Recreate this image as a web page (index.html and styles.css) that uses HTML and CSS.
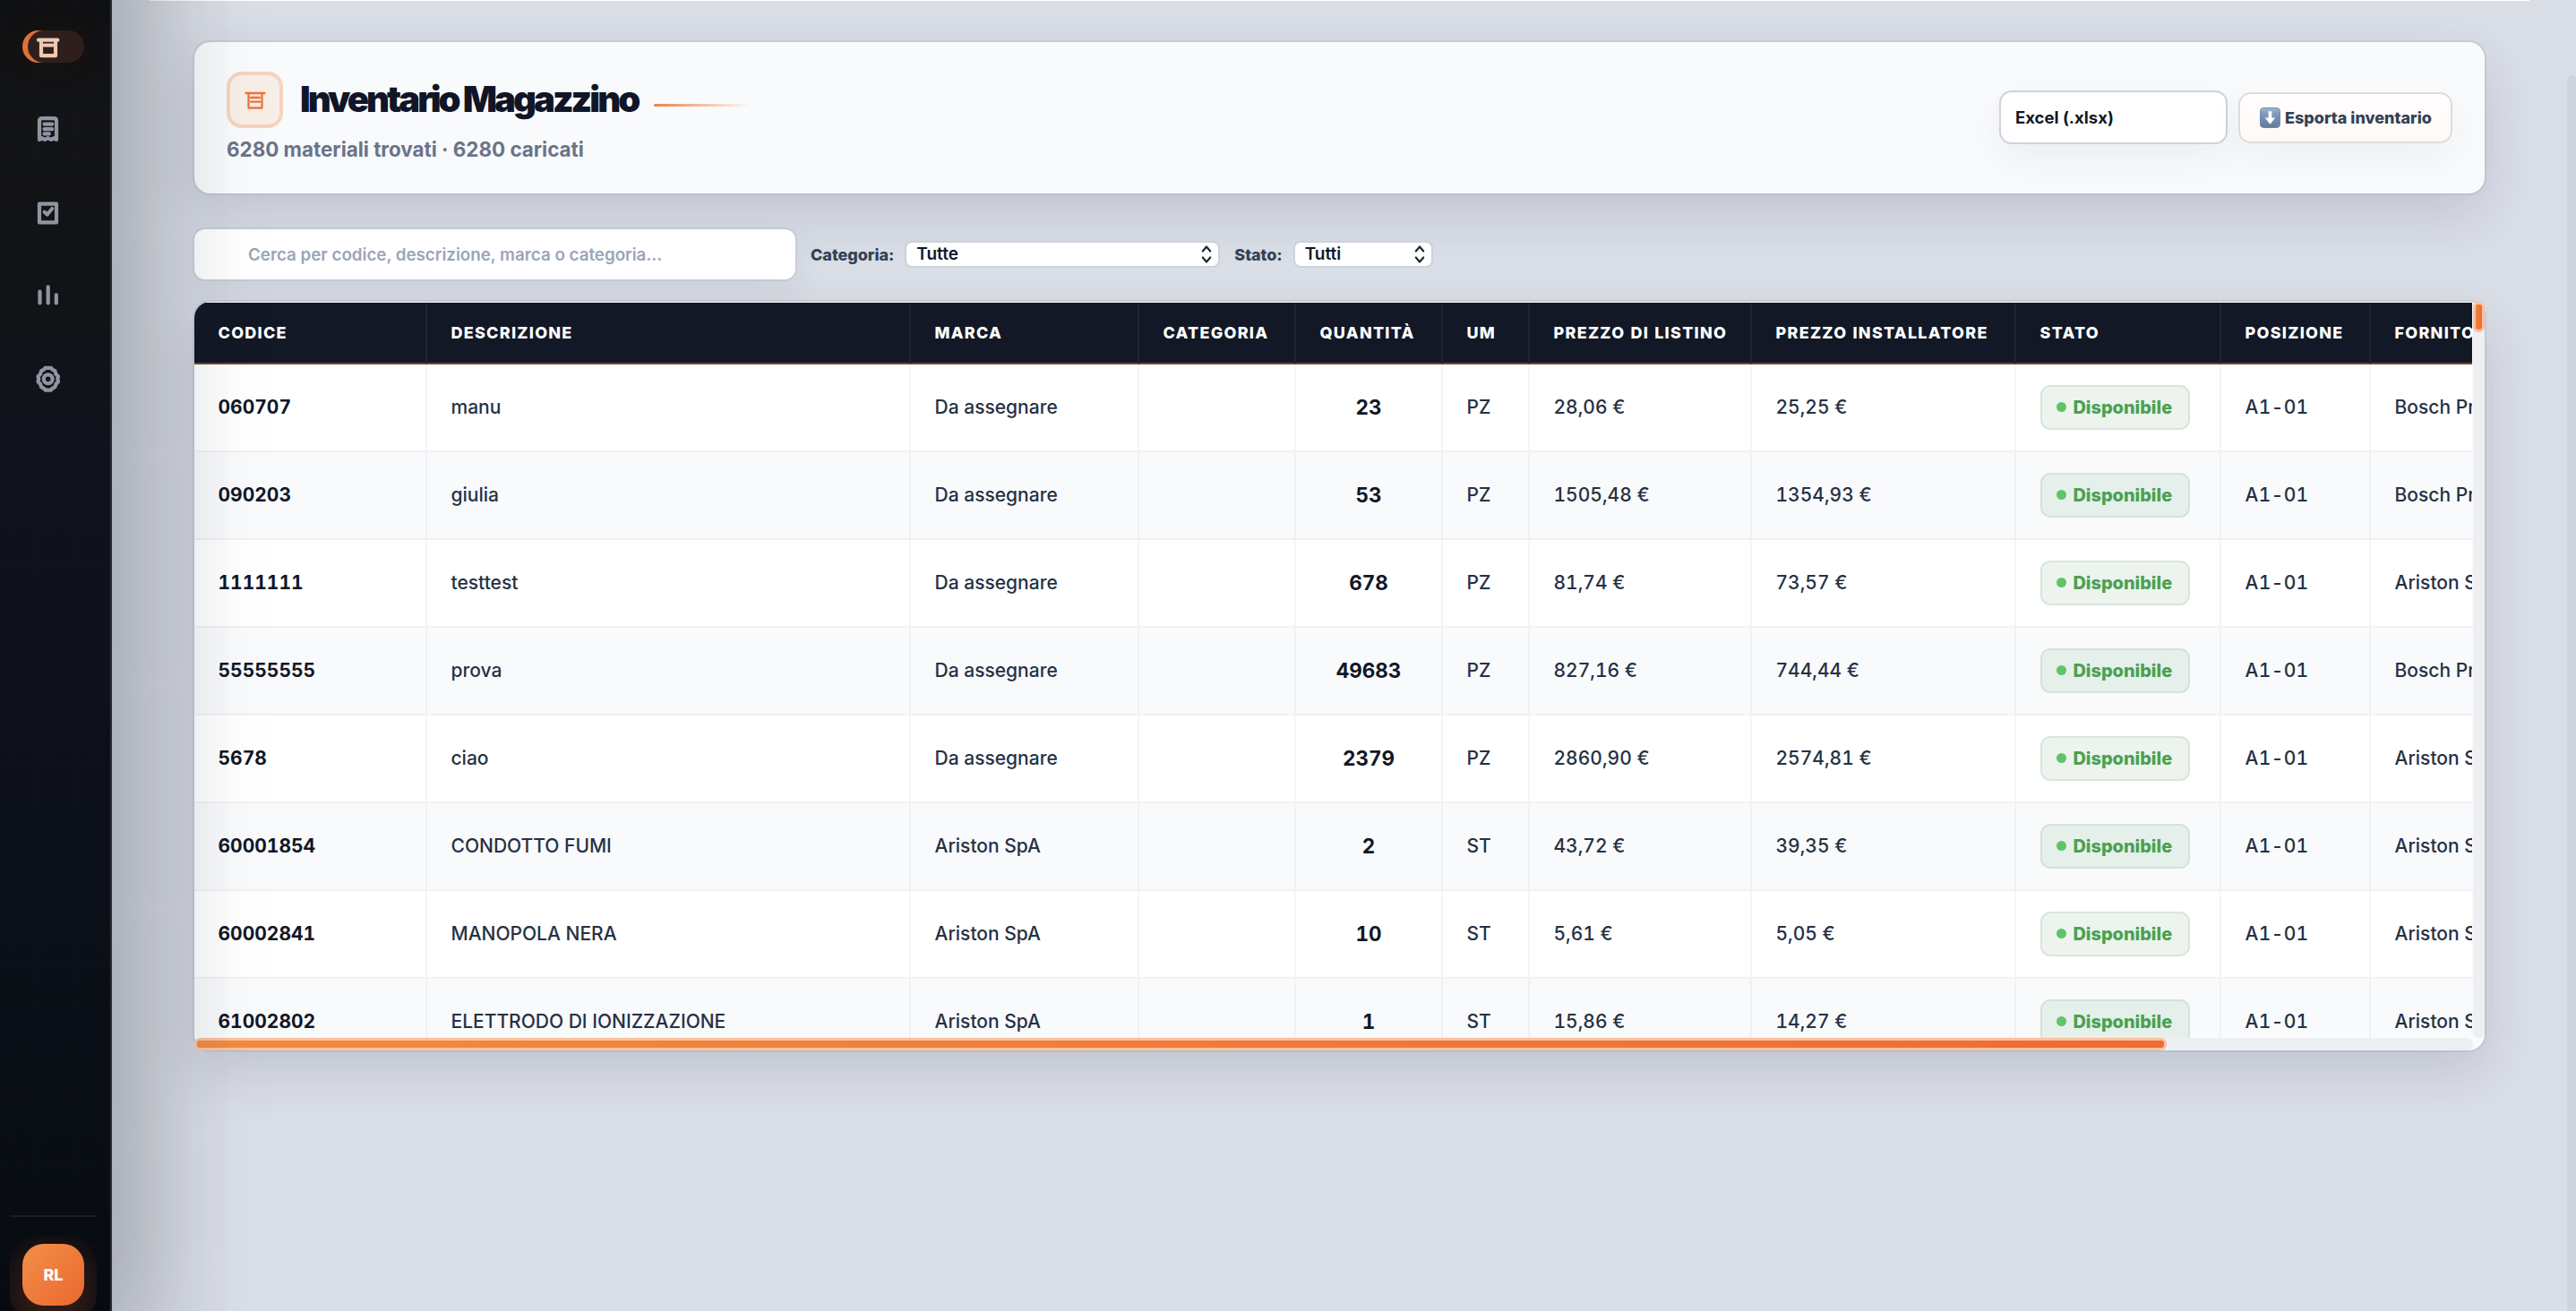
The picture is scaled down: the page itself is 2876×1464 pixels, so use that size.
FILE: index.html
```html
<!DOCTYPE html>
<html lang="it">
<head>
<meta charset="utf-8">
<title>Inventario Magazzino</title>
<link rel="stylesheet" href="styles.css">
</head>
<body>
<div class="app">
  <aside class="sidebar">
    <nav class="nav">
      <a class="nav-item active"><svg viewBox="0 0 36 36"><path d="M7 10.7H28.3M10 11.5V28.2H26V11.5M13.6 16.5H22.4"/></svg></a>
      <a class="nav-item"><svg viewBox="0 0 36 36"><path d="M8 29V8Q8 5.2 10.8 5.2H24.2Q27 5.2 27 8V29L24 27.2L21 29L17.5 27.2L14 29L11 27.2Z"/><path d="M13.5 11.6H22.2M13.5 17.2H22.2M13.5 22.4H18.8"/></svg></a>
      <a class="nav-item"><svg viewBox="0 0 36 36"><path d="M8 7.6H27V28.4H8Z"/><path d="M13.7 16.8L16.6 19.6L22.2 13"/></svg></a>
      <a class="nav-item"><svg viewBox="0 0 36 36"><path d="M8.5 13.5V26.5M17.7 8.3V26.5M26.8 17.3V26.5"/></svg></a>
      <a class="nav-item"><svg viewBox="0 0 36 36"><path d="M14.5 5.8H21L22.3 7.6L25.4 9.2L26.2 12.5L29 15.4L28.3 18.3L29 21.2L26.4 24L25.4 27.2L22.3 28.8L21 30.6H14.5L13.2 28.8L10.1 27.2L9.2 24L6.5 21.2L7.2 18.3L6.5 15.4L9.2 12.5L10.1 9.2L13.2 7.6Z"/><circle cx="17.7" cy="18.2" r="4.9"/></svg></a>
    </nav>
    <div class="account"><div class="avatar-shell"><div class="avatar">RL</div></div></div>
  </aside>
  <main class="main">
    <header class="card page-head">
      <div class="head-text">
        <div class="title-row">
          <span class="title-icon"><svg viewBox="0 0 24 24"><path d="M1.5 4H22.5M4.5 4V20.5H19.5V4M7 9H17M7 13.7H17"/></svg></span>
          <h1 class="title">Inventario Magazzino</h1>
          <span class="title-line"></span>
        </div>
        <p class="subtitle">6280 materiali trovati · 6280 caricati</p>
      </div>
      <div class="head-actions">
        <div class="format">Excel (.xlsx)</div>
        <button class="export"><svg viewBox="0 0 24 24"><defs><linearGradient id="key" x1="0" y1="0" x2="0" y2="1"><stop offset="0" stop-color="#a3b8cf"/><stop offset=".3" stop-color="#7f9bbb"/><stop offset="1" stop-color="#62799a"/></linearGradient></defs><rect x=".5" y=".5" width="23" height="23" rx="4" fill="url(#key)" stroke="#6d87a5"/><path d="M10 4.5H14V12H18L12 19.5L6 12H10Z" fill="#fff"/></svg>Esporta inventario</button>
      </div>
    </header>

    <div class="toolbar">
      <div class="search">Cerca per codice, descrizione, marca o categoria...</div>
      <span class="label">Categoria:</span>
      <div class="select wide">Tutte<svg viewBox="0 0 12 22"><path d="M1.8 7.5L6 2.5L10.2 7.5M1.8 14.5L6 19.5L10.2 14.5"/></svg></div>
      <span class="label label-state">Stato:</span>
      <div class="select">Tutti<svg viewBox="0 0 12 22"><path d="M1.8 7.5L6 2.5L10.2 7.5M1.8 14.5L6 19.5L10.2 14.5"/></svg></div>
    </div>

    <section class="card table-card">
      <div class="viewport">
        <table class="table">
          <colgroup><col class="c1"><col class="c2"><col class="c3"><col class="c4"><col class="c5"><col class="c6"><col class="c7"><col class="c8"><col class="c9"><col class="c10"><col class="c11"></colgroup>
          <thead><tr><th>CODICE</th><th>DESCRIZIONE</th><th>MARCA</th><th>CATEGORIA</th><th>QUANTITÀ</th><th>UM</th><th>PREZZO DI LISTINO</th><th>PREZZO INSTALLATORE</th><th>STATO</th><th>POSIZIONE</th><th>FORNITORE</th></tr></thead>
          <tbody>
            <tr><td class="code">060707</td><td>manu</td><td>Da assegnare</td><td></td><td class="qty">23</td><td>PZ</td><td>28,06 €</td><td>25,25 €</td><td><span class="badge">Disponibile</span></td><td class="pos">A1-01</td><td>Bosch Professional</td></tr>
            <tr><td class="code">090203</td><td>giulia</td><td>Da assegnare</td><td></td><td class="qty">53</td><td>PZ</td><td>1505,48 €</td><td>1354,93 €</td><td><span class="badge">Disponibile</span></td><td class="pos">A1-01</td><td>Bosch Professional</td></tr>
            <tr><td class="code">1111111</td><td>testtest</td><td>Da assegnare</td><td></td><td class="qty">678</td><td>PZ</td><td>81,74 €</td><td>73,57 €</td><td><span class="badge">Disponibile</span></td><td class="pos">A1-01</td><td>Ariston SpA</td></tr>
            <tr><td class="code">55555555</td><td>prova</td><td>Da assegnare</td><td></td><td class="qty">49683</td><td>PZ</td><td>827,16 €</td><td>744,44 €</td><td><span class="badge">Disponibile</span></td><td class="pos">A1-01</td><td>Bosch Professional</td></tr>
            <tr><td class="code">5678</td><td>ciao</td><td>Da assegnare</td><td></td><td class="qty">2379</td><td>PZ</td><td>2860,90 €</td><td>2574,81 €</td><td><span class="badge">Disponibile</span></td><td class="pos">A1-01</td><td>Ariston SpA</td></tr>
            <tr><td class="code">60001854</td><td>CONDOTTO FUMI</td><td>Ariston SpA</td><td></td><td class="qty">2</td><td>ST</td><td>43,72 €</td><td>39,35 €</td><td><span class="badge">Disponibile</span></td><td class="pos">A1-01</td><td>Ariston SpA</td></tr>
            <tr><td class="code">60002841</td><td>MANOPOLA NERA</td><td>Ariston SpA</td><td></td><td class="qty">10</td><td>ST</td><td>5,61 €</td><td>5,05 €</td><td><span class="badge">Disponibile</span></td><td class="pos">A1-01</td><td>Ariston SpA</td></tr>
            <tr><td class="code">61002802</td><td>ELETTRODO DI IONIZZAZIONE</td><td>Ariston SpA</td><td></td><td class="qty">1</td><td>ST</td><td>15,86 €</td><td>14,27 €</td><td><span class="badge">Disponibile</span></td><td class="pos">A1-01</td><td>Ariston SpA</td></tr>
          </tbody>
        </table>
      </div>
      <div class="track track-y"><div class="thumb thumb-y"></div></div>
      <div class="track track-x"><div class="thumb thumb-x"></div></div>
    </section>
  </main>
  <div class="top-line"></div>
  <div class="page-scroll"></div>
</div>
</body>
</html>
```
FILE: styles.css
```css
* { box-sizing: border-box; }
body { margin: 0; font-family: Inter, "Liberation Sans", sans-serif; color: #1e293b; }
.app { position: relative; display: flex; width: 100vw; height: 100vh; overflow: hidden; background: #dadee6; }

/* Sidebar */
.sidebar {
  position: relative; z-index: 2; flex: none; width: 125px; height: 100%;
  display: flex; flex-direction: column; justify-content: space-between;
  border-right: 2px solid #2b2d33;
  background:
    repeating-linear-gradient(90deg, transparent 0 41px, rgba(255,255,255,.012) 41px 42px, transparent 42px 45px),
    repeating-linear-gradient(180deg, transparent 0 42px, rgba(255,255,255,.012) 42px 43px, transparent 43px 45px),
    linear-gradient(180deg, #0f1012 0, #131416 140px, #111316 320px, #10131d 500px, #0c101a 900px, #070b11 100%);
}
.sidebar::after { content: ""; position: absolute; top: -140px; bottom: -60px; left: 0; right: -2px; box-shadow: 24px 0 140px rgba(15,20,35,.38); pointer-events: none; }
.nav { display: flex; flex-direction: column; gap: 56.8px; padding: 34px 0 0 25px; }
.nav-item { width: 69px; height: 36px; padding-left: 11px; border-radius: 18px; color: #8f95a1; }
.nav-item svg { display: block; width: 36px; height: 36px; fill: none; stroke: currentColor; stroke-width: 4.2; stroke-linecap: round; stroke-linejoin: round; }
.nav-item.active { background: #2f1f1c; box-shadow: inset 6px 0 0 #e07038, 0 0 40px rgba(240,120,50,.05); color: #efc8b2; }
.account { margin: 0 15px 0 11px; height: 107px; border-top: 2px solid #1b1d23; padding-top: 21px; }
.avatar-shell { height: 97px; border-radius: 32px; padding: 9px 14px; background: radial-gradient(circle at 50% 65%, #2e1b16 30%, #100e12 80%); }
.avatar { width: 69px; height: 69px; border-radius: 24px; background: linear-gradient(135deg, #f28f47, #eb672f); color: #fff; font-size: 18px; font-weight: 800; display: flex; align-items: center; justify-content: center; }

/* Page */
.main { flex: 1; min-width: 0; padding: 47px 102px 0 92px; }
.card { border-radius: 18px; background: #f9fafc; box-shadow: 0 0 0 2px rgba(150,163,180,.25), 0 22px 60px rgba(40,50,90,.15); }
.page-head { display: flex; justify-content: space-between; height: 169px; padding: 33px 36px 0 36px; }
.title-row { display: flex; align-items: center; height: 63px; }
.title-icon { width: 63px; height: 63px; border: 4px solid #f5d3bf; border-radius: 17px; background: #f8eee8; display: flex; align-items: center; justify-content: center; }
.title-icon svg { width: 24px; height: 24px; fill: none; stroke: #ee7436; stroke-width: 2.3; stroke-linejoin: round; stroke-linecap: round; }
.title { margin: -2px 0 0 19px; width: 395px; font-size: 40px; font-weight: 900; letter-spacing: -2.92px; line-height: 48px; color: #101527; white-space: nowrap; }
.title-line { width: 107px; height: 3px; margin-top: 12px; border-radius: 2px; background: linear-gradient(90deg, #ee8240, rgba(238,130,64,0)); }
.subtitle { margin: 10px 0 0; font-size: 22.4px; line-height: 27px; font-weight: 700; color: #69748a; }
.head-actions { display: flex; align-items: center; gap: 12px; height: 102px; }
.format { width: 255px; height: 60px; padding-left: 16px; border: 2px solid #cdd3da; border-radius: 14px; background: #fff; box-shadow: 0 16px 40px rgba(40,50,80,.06); font-size: 18.5px; font-weight: 700; line-height: 56px; color: #111827; }
.export { width: 239px; height: 57px; padding: 0 0 0 22px; display: flex; align-items: center; gap: 5px; border: 2px solid #dddcdb; border-radius: 14px; background: linear-gradient(#fffefe, #fff9f5); box-shadow: 0 16px 40px rgba(40,50,80,.05); font: 800 18px Inter, sans-serif; color: #334155; white-space: nowrap; }
.export svg { width: 23px; height: 23px; flex: none; }

.toolbar { display: flex; align-items: center; height: 56px; margin-top: 40px; }
.search { width: 671px; height: 56px; padding-left: 60px; border-radius: 12px; background: #fff; box-shadow: 0 0 0 2px rgba(150,163,180,.2), 0 14px 40px rgba(40,50,90,.07); font-size: 18.75px; font-weight: 600; line-height: 57px; color: #9aa5b9; }
.label { margin-left: 17px; font-size: 18px; font-weight: 800; letter-spacing: -.05px; color: #334155; }
.label-state { margin-left: 16px; }
.select { position: relative; display: flex; align-items: center; justify-content: space-between; width: 156px; height: 30px; margin: -1px 0 0 12px; padding: 0 7px 0 11px; border: 2px solid #ccd2da; border-radius: 8px; background: #fff; font-size: 19px; font-weight: 600; line-height: 24px; color: #111827; }
.select.wide { width: 352px; }
.select svg { width: 12px; height: 22px; fill: none; stroke: #1f2937; stroke-width: 2.2; stroke-linecap: round; stroke-linejoin: round; }

/* Inventory table */
.table-card { display: grid; grid-template: 822px 14px / 2544px 13px; margin-top: 25px; }
.viewport { overflow: hidden; border-radius: 18px 0 0 0; background: #fff; padding-top: 1px; width: 2543px; }
.table { table-layout: fixed; width: 2778px; border-collapse: separate; border-spacing: 0; font-variant-numeric: tabular-nums; }
.c1 { width: 260px; } .c2 { width: 540px; } .c3 { width: 255px; } .c4 { width: 175px; } .c5 { width: 164px; } .c6 { width: 97px; }
.c7 { width: 248px; } .c8 { width: 295px; } .c9 { width: 229px; } .c10 { width: 167px; } .c11 { width: 348px; }
.table th, .table td { padding: 0 0 0 26.5px; text-align: left; white-space: nowrap; border-right: 2px solid #f4f5f7; }
.table th { height: 69px; background: #121826; border-right-color: #1d2432; border-bottom: 2px solid #76452f; font-size: 18px; font-weight: 800; letter-spacing: 1.25px; color: #fff; }
.table td { height: 98px; border-bottom: 2px solid #f0f1f3; font-size: 21px; font-weight: 450; color: #263143; padding-bottom: 1px; }
.table tbody tr:nth-child(even) td { background: #f9fafc; border-right-color: #f0f1f4; }
.table td.code { font-weight: 650; color: #111827; }
.table td.qty { padding: 0 0 1px; text-align: center; font-size: 22.5px; font-weight: 700; color: #111827; }
.table td.pos { letter-spacing: .35px; }
.badge { display: inline-flex; align-items: center; gap: 8px; width: 167px; height: 50px; padding-left: 16px; border: 2px solid #dae4dc; border-radius: 11px; background: #edf4ee; font-size: 19.9px; font-weight: 800; color: #4aa152; vertical-align: middle; }
.badge::before { content: ""; width: 11px; height: 11px; border-radius: 50%; background: #5fc468; }
tr:nth-child(even) .badge { background: #e6f0eb; border-color: #d5e1dc; }

.track { background: #eeeff3; border-radius: 6px; }
.track-x { overflow: hidden; }
.thumb { border: 3px solid #f9c2a2; border-radius: 6px; }
.thumb-y { height: 34px; background: linear-gradient(90deg, #f0843f, #ec6b30); }
.thumb-x { width: 2202px; height: 14px; background: linear-gradient(90deg, #f28b3f, #ee6c31); }

.top-line { position: absolute; top: 0; left: 167px; width: 2657px; height: 1px; background: #fff; }
.page-scroll { position: absolute; top: 84px; right: 0; bottom: 0; width: 10px; border-radius: 6px 6px 0 0; background: #cdd4e0; }
```
